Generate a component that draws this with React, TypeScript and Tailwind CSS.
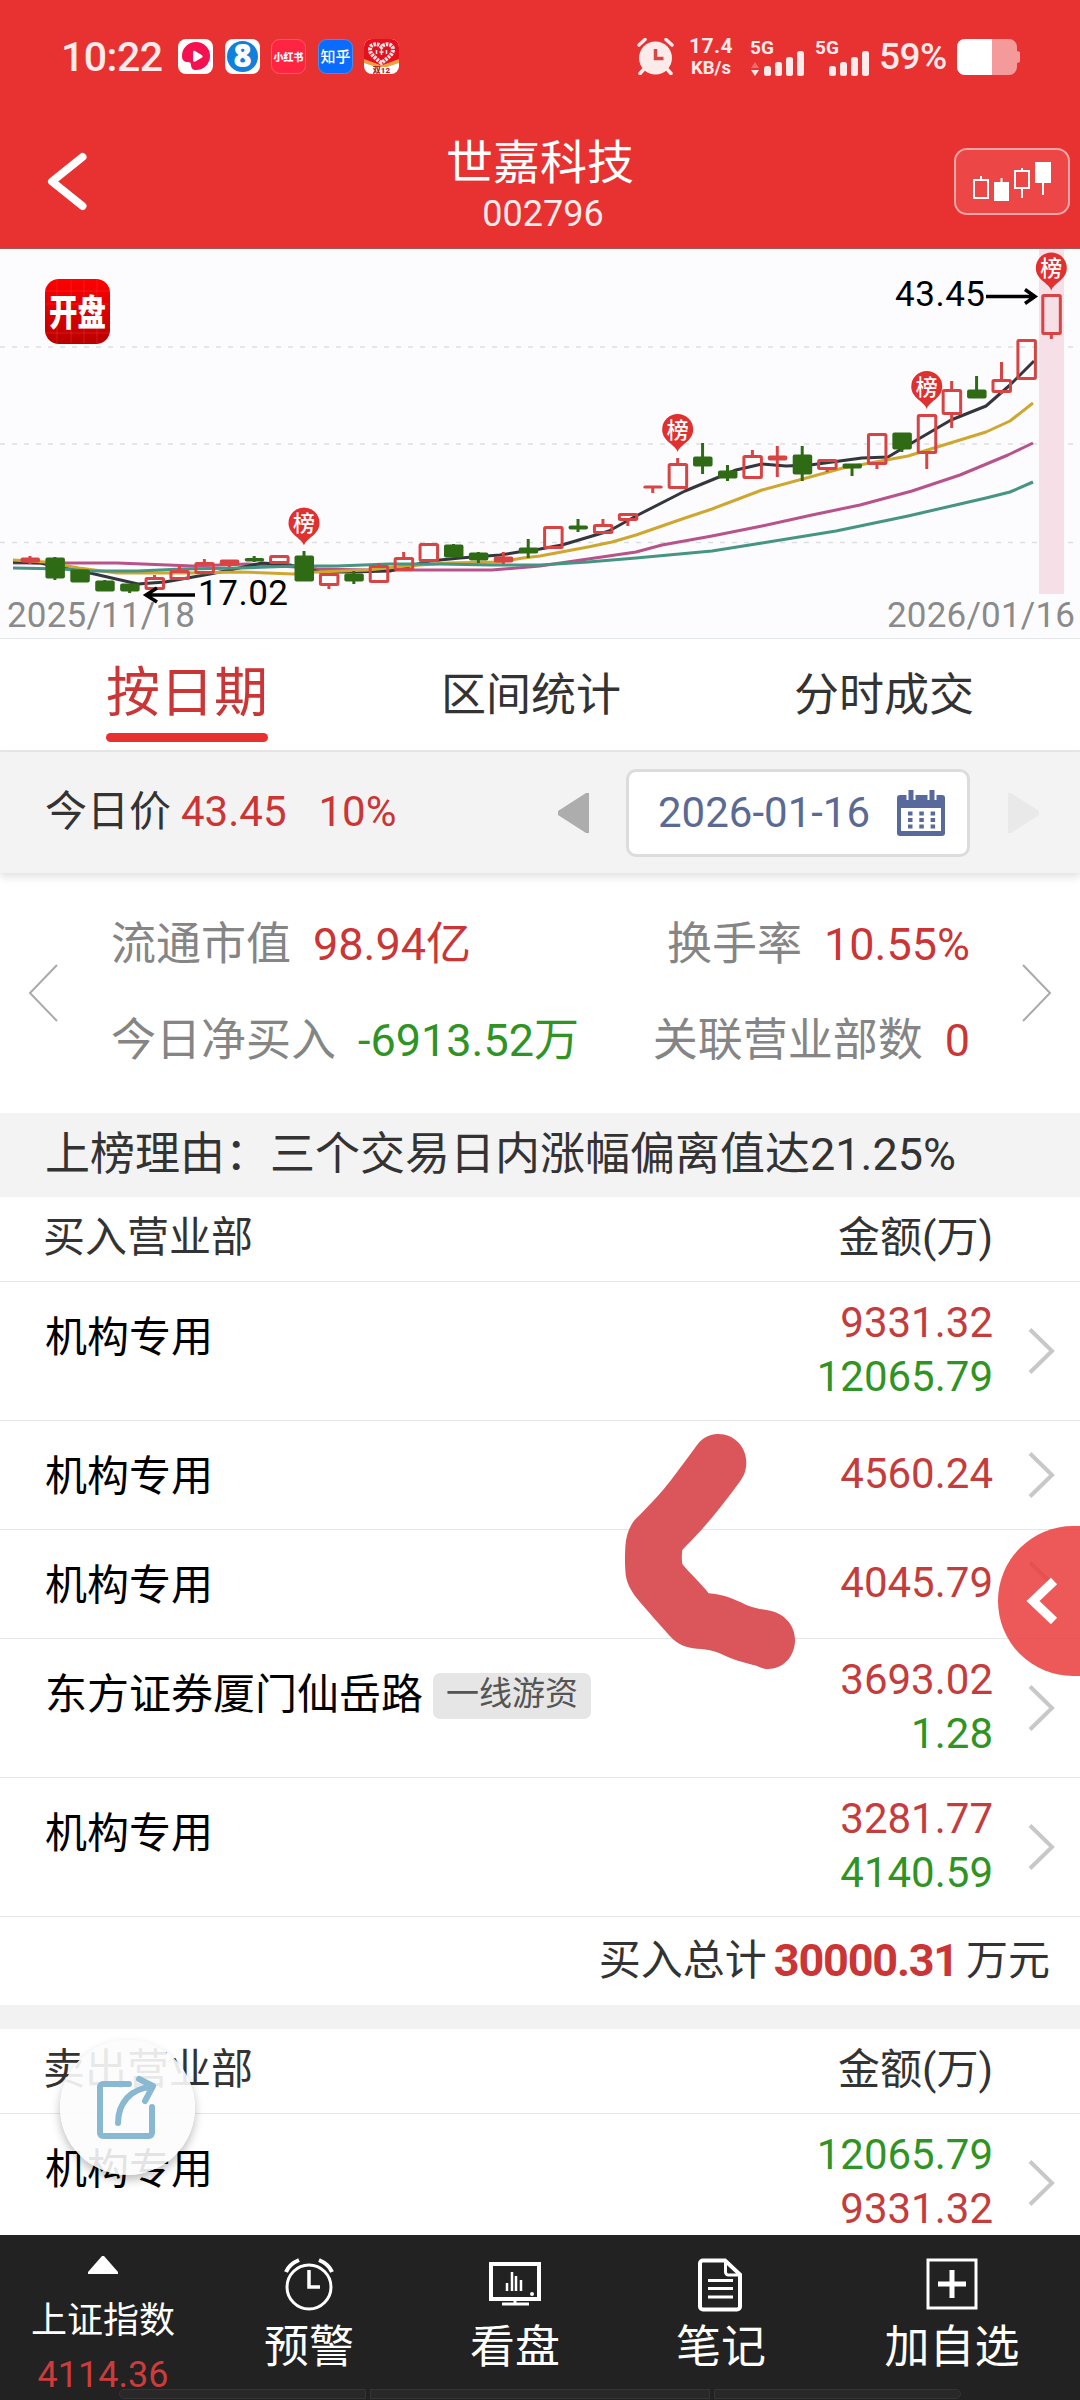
import type { ReactNode } from 'react'
import clsx from 'clsx'

type Tone = 'up' | 'down'

interface Seat {
  name: string
  tag?: string
  amounts: { value: string; tone: Tone }[]
}

interface Candle {
  kind: 'hollow' | 'red' | 'green'
  top: number
  bottom: number
  high?: number
  low?: number
}

const buySeats: Seat[] = [
  { name: '机构专用', amounts: [{ value: '9331.32', tone: 'up' }, { value: '12065.79', tone: 'down' }] },
  { name: '机构专用', amounts: [{ value: '4560.24', tone: 'up' }] },
  { name: '机构专用', amounts: [{ value: '4045.79', tone: 'up' }] },
  { name: '东方证券厦门仙岳路', tag: '一线游资', amounts: [{ value: '3693.02', tone: 'up' }, { value: '1.28', tone: 'down' }] },
  { name: '机构专用', amounts: [{ value: '3281.77', tone: 'up' }, { value: '4140.59', tone: 'down' }] },
]

const sellSeats: Seat[] = [
  { name: '机构专用', amounts: [{ value: '12065.79', tone: 'down' }, { value: '9331.32', tone: 'up' }] },
]

const g = (top: number, bottom: number, high?: number, low?: number): Candle => ({ kind: 'green', top, bottom, high, low })
const h = (top: number, bottom: number, high?: number, low?: number): Candle => ({ kind: 'hollow', top, bottom, high, low })
const r = (top: number, bottom: number, high?: number, low?: number): Candle => ({ kind: 'red', top, bottom, high, low })

const candles: Candle[] = [
  r(558, 562, 556, 564), g(558, 578, 557, 580), g(570, 582), g(581, 591, 580), g(584, 591, 584, 593),
  h(578, 589, 575), h(571, 579, 566), h(563, 573, 559), r(560, 565, 560, 567), g(558.5, 561, 556, 562),
  h(556, 563, 555), g(556, 581, 551), h(574, 585, 573, 589), g(574, 581, 571, 584), h(566, 582, 563),
  h(558, 570, 552), h(544, 561, 543), g(545, 557, 544), g(553, 560, 552, 563), r(557, 562, 552, 564),
  g(548, 553, 539, 558), h(527, 548), g(526, 529, 519, 532), h(525, 533, 519), h(514, 520, 513, 526),
  r(486, 488, 486, 493), h(464, 488, 458), g(457, 466, 443, 474), g(471, 478, 465, 481), h(456, 478, 450, 479),
  r(456, 460, 446, 477), g(455, 474, 446, 481), h(460, 469, 459, 472), g(464, 468, 464, 476), h(434, 464, 434, 469),
  g(433, 449, 433, 452), h(415, 453, 414, 469), h(390, 414, 381, 428), g(390, 398, 376), h(380, 392, 362, 394),
  h(340, 379), h(295, 334, 294, 339),
]

const candleX = (i: number) => 30 + i * 24.91

const averages = [
  { color: '#b8528a', points: '13,563 117,563 193,566 248,564 296,567 317,569 368,570 420,570 492,570 540,566 588,559 636,552 662,545 712,536 762,526 812,515 860,505 912,491 960,475 1008,455 1033,443' },
  { color: '#33363d', points: '13,562 40,563 90,573 138,584 165,582 210,574 230,570 262,563 290,565 320,572 350,572 390,571 430,561 460,558 500,555 525,551 540,549 562,545 609,531 636,516 685,491 719,477 736,470 762,464 786,466 810,465 862,458 888,457 910,444 951,420 986,406 1010,385 1034,361' },
  { color: '#cfa72e', points: '13,560 45,562 79,568 117,573 189,573 241,572 293,574 317,572 368,570 406,566 448,563 499,562 523,558 540,556 588,547 612,542 636,535 685,518 712,509 762,490 843,468 908,456 960,440 986,432 1010,421 1033,403' },
  { color: '#469482', points: '13,568 62,569 90,571 138,571 182,569 241,568 296,566 337,566 389,564 440,564 492,565 540,565 588,562 636,558 712,551 762,543 836,531 908,516 960,504 986,498 1010,492 1033,482' },
]

// pin y is the centre of the round part
const pins = [
  { i: 11, y: 523 },
  { i: 26, y: 429.5 },
  { i: 36, y: 386.5 },
  { i: 41, y: 268 },
]

function Signal({ arrows }: { arrows?: boolean }) {
  return (
    <svg width="56" height="38" viewBox="0 0 56 38" fill="#fdeaea" className="shrink-0 overflow-visible">
      <text x="0" y="15.500" fontSize="19" fontWeight="700">5G</text>
      {arrows && <path d="M1 30h8l-4-6z" fill="#ef6b6b" />}
      {arrows && <path d="M1 32h8l-4 6z" />}
      <rect x="14" y="28" width="7" height="10" rx="2.500" />
      <rect x="25" y="24" width="7" height="14" rx="2.500" />
      <rect x="36" y="19" width="7" height="19" rx="2.500" />
      <rect x="47" y="13" width="7" height="25" rx="2.500" />
    </svg>
  )
}

function StatusBar() {
  return (
    <div className="flex h-[113px] items-center pl-[61px] pr-[60px] text-[#fdeaea]">
      <span className="w-[117px] text-[41px] leading-[48px] font-medium tracking-[-0.5px]">10:22</span>
      <div className="flex gap-[11.5px]">
        <svg width="35" height="35" viewBox="0 0 35 35">
          <rect width="35" height="35" rx="8" fill="#fff" />
          <path d="M4 17a14 14 0 1 1 14 14c-3 0-5-2-5-5 0-2-1-3-3-3-4 0-6-2-6-6z" fill="#f5104f" />
          <path d="M15 13.500c0-1.600 1-2 2.400-1.300l6.300 3.800c1.300.8 1.300 2 0 2.800l-6.300 3.600c-1.400.7-2.400.2-2.400-1.300z" fill="#fff" />
        </svg>
        <svg width="35" height="35" viewBox="0 0 35 35" className="overflow-visible">
          <rect width="35" height="35" rx="8" fill="#fff" />
          <circle cx="17.500" cy="17.500" r="15.500" fill="#1180dc" />
          <text x="17.500" y="28" textAnchor="middle" fontSize="31" fontWeight="900" fill="#fff" className="font-['Noto_Sans']">8</text>
        </svg>
        <svg width="35" height="35" viewBox="0 0 35 35">
          <rect x=".5" y=".5" width="34" height="34" rx="8" fill="#ff2442" stroke="#ff5a6e" />
          <text x="17.500" y="21.500" textAnchor="middle" fontSize="10" fontWeight="900" fill="#fff">小红书</text>
        </svg>
        <svg width="35" height="35" viewBox="0 0 35 35">
          <rect x=".5" y=".5" width="34" height="34" rx="8" fill="#0a6cff" stroke="#4d8de8" />
          <text x="17.500" y="23" textAnchor="middle" fontSize="15" fontWeight="500" fill="#fff">知乎</text>
        </svg>
        <svg width="35" height="35" viewBox="0 0 35 35">
          <rect width="35" height="35" rx="8" fill="#fff" />
          <path d="M0 21V8a8 8 0 0 1 8-8h19a8 8 0 0 1 8 8v13l-17.500 6z" fill="#e60f1e" />
          <path d="M0 20l17.500 6.500L35 20v4l-12 4H12L0 24z" fill="#f0a040" />
          <path d="M17.500 24C10 18 6 15 6 10.500c0-6 8-7 11.500-2.500C21 3.500 29 4.500 29 10.500c0 4.500-4 7.500-11.500 13.500z" fill="none" stroke="#fde3e3" strokeWidth="4" strokeDasharray="2.500 1" />
          <path d="M12.500 11v4M22.500 11v4M15.500 13h4M17.500 11v5" stroke="#fde3e3" strokeWidth="1.500" />
          <text x="17.500" y="33.500" textAnchor="middle" fontSize="8" fontWeight="900" fill="#b3261e">双12</text>
        </svg>
      </div>

      <div className="ml-auto flex items-center">
        <svg width="37" height="37" viewBox="0 0 37 37" className="mr-[16px]">
          <circle cx="18.500" cy="20" r="16.500" fill="#fdeaea" />
          <path d="M2 7l6-5.500M35 7l-6-5.500M7 31l-4 4.500M30 31l4 4.500" stroke="#fdeaea" strokeWidth="3.500" strokeLinecap="round" />
          <path d="M18.500 11v9.500h8" fill="none" stroke="#d94444" strokeWidth="3.500" />
        </svg>
        <div className="mr-[18px] flex w-[42px] flex-col items-center font-bold">
          <span className="text-[21px] leading-[22px] tracking-[0.5px]">17.4</span>
          <span className="text-[18.5px] leading-[22px]">KB/s</span>
        </div>
        <Signal arrows />
        <span className="w-[9px]" />
        <Signal />
        <span className="ml-[8px] w-[78px] text-[37px] leading-[44px] font-medium tracking-[-0.5px]">59%</span>
        <svg width="63" height="36" viewBox="0 0 63 36" className="shrink-0">
          <path d="M8 0h44a8 8 0 0 1 8 8v4l3 1v10l-3 1v4a8 8 0 0 1-8 8H8a8 8 0 0 1-8-8V8a8 8 0 0 1 8-8z" fill="#f59a9a" />
          <path d="M8 0h27v36H8a8 8 0 0 1-8-8V8a8 8 0 0 1 8-8z" fill="#fff" />
        </svg>
      </div>
    </div>
  )
}

function TitleBar() {
  return (
    <div className="grid h-[135px] grid-cols-[1fr_auto_1fr] pr-[10px] pl-[10px]">
      <svg width="60" height="60" viewBox="0 0 60 60" fill="none" className="mt-[39px] ml-[37px]">
        <path d="M35.500 5L5 29.500l30.500 24.500" stroke="#fff" strokeWidth="8" strokeLinecap="round" strokeLinejoin="round" />
      </svg>
      <div className="flex flex-col items-center text-white">
        <h1 className="mt-[20px] text-[47px] leading-[60px]">世嘉科技</h1>
        <p className="mt-[-1px] mr-[-6px] text-[36px] leading-[44px] text-[#fdeaea]">002796</p>
      </div>
      <button className="mt-[35px] h-[67px] w-[116px] justify-self-end rounded-[13px] border-2 border-[#f6a6a6] bg-[#ec4646]" aria-label="K线">
        <svg width="112" height="63" viewBox="0 0 112 63" stroke="#fff" strokeWidth="2" fill="none">
          <path d="M18 30h14v18H18zM25 30v-4M59 21h14v17H59zM66 21v-3M66 38v10" />
          <path d="M39 33h13v17H39zM80 13h14v19H80z" fill="#fff" />
          <path d="M45.500 32v-4M87 32v13" />
        </svg>
      </button>
    </div>
  )
}

function KLine() {
  return (
    <svg width="1080" height="391" viewBox="0 248 1080 391" className="block bg-[#fcfcff]">
      <line x1="0" x2="1080" y1="248.500" y2="248.500" stroke="#a05a5a" />
      {[347, 444, 542.5].map(y => (
        <line key={y} x1="0" x2="1080" y1={y} y2={y} stroke="#dcdfe0" strokeWidth="1.500" strokeDasharray="5 7" />
      ))}
      <rect x="1039" y="249" width="25" height="345" fill="#f6dfe6" />

      <defs>
        <linearGradient id="logo" x1="0" y1="0" x2="0" y2="1">
          <stop offset="0" stopColor="#ff0000" />
          <stop offset="1" stopColor="#b80000" />
        </linearGradient>
      </defs>
      <rect x="45" y="279" width="65" height="65" rx="14" fill="url(#logo)" />
      <path d="M57 280v63M71 280v63M84 280v63M97 280v63M46 291h63M46 304h63M46 333h63" stroke="#ff5050" strokeOpacity=".3" />
      <text x="77.500" y="325.500" textAnchor="middle" fontSize="36" fontWeight="900" fill="#fff" textLength="57" lengthAdjust="spacingAndGlyphs">开盘</text>

      {averages.map(line => (
        <polyline key={line.color} points={line.points} fill="none" stroke={line.color} strokeWidth="3" strokeLinejoin="round" />
      ))}

      {candles.map((c, i) => {
        const x = candleX(i)
        const color = c.kind === 'green' ? '#2f6a14' : '#d84343'
        const high = c.high ?? c.top
        const low = c.low ?? c.bottom
        return (
          <g key={i} stroke={color} strokeWidth="3">
            {high < c.top && <line x1={x} x2={x} y1={high} y2={c.top} />}
            {low > c.bottom && <line x1={x} x2={x} y1={c.bottom} y2={low} />}
            {c.kind === 'hollow' ? (
              <rect x={x - 8.5} y={c.top + 0.5} width="17.500" height={c.bottom - c.top - 1} rx="1" fill="none" />
            ) : (
              <rect x={x - 9.5} y={c.top - 0.5} width="19.500" height={c.bottom - c.top + 1} rx="2" fill={color} stroke="none" />
            )}
          </g>
        )
      })}

      {pins.map(p => (
        <g key={p.i} transform={`translate(${candleX(p.i)} ${p.y})`}>
          <path d="M0 22.500C-2 15-15.500 12-15.500 0a15.500 15.500 0 0 1 31 0C15.500 12 2 15 0 22.500z" fill="#e03030" />
          <text y="8" textAnchor="middle" fontSize="22" fontWeight="500" fill="#fff">榜</text>
        </g>
      ))}

      <g fill="none" stroke="#000" strokeWidth="3.500">
        <path d="M195 595h-47M157 588l-11 7 11 7" />
        <path d="M986 296.500h47M1025 289.500l10 7-10 7" />
      </g>
      <text x="198" y="605" fontSize="35" fill="#000" textLength="90">17.02</text>
      <text x="895" y="306" fontSize="35" fill="#000" textLength="90">43.45</text>
      <text x="7" y="627" fontSize="35" fill="#8a8a8a" textLength="188">2025/11/18</text>
      <text x="887" y="627" fontSize="35" fill="#8a8a8a" textLength="188">2026/01/16</text>
      <line x1="0" x2="1080" y1="638.500" y2="638.500" stroke="#e4e8ea" />
    </svg>
  )
}

function Tabs() {
  return (
    <nav className="flex h-[113px] justify-between border-b-2 border-[#e8e8e8] px-[106px] text-[45px] text-[#333]">
      <button className="flex flex-col text-[54px] text-[#cc3535]">
        <span className="mt-[17px] h-[77px] leading-[76px]">按日期</span>
        <span className="h-[9px] w-full rounded-full bg-[#e83232]" />
      </button>
      <button className="h-[111px] pt-[2px] leading-[110px]">区间统计</button>
      <button className="h-[111px] pt-[2px] leading-[110px]">分时成交</button>
    </nav>
  )
}

function PriceBar() {
  return (
    <div className="relative flex h-[121px] items-center bg-[#f3f3f3] pl-[45px] pr-[40px] text-[42px] shadow-[0_4px_8px_rgba(0,0,0,0.12)]">
      <div className="flex pb-[2px] leading-[60px]">
        <span className="text-[#333]">今日价</span>
        <span className="ml-[10px] text-[#cc3535]">43.45</span>
        <span className="ml-[32px] text-[#cc3535]">10%</span>
      </div>
      <svg width="32" height="42" viewBox="0 0 32 42" className="ml-auto">
        <path d="M32 1v40h-3L1 23v-4L29 1z" fill="#adadad" />
      </svg>
      <button className="ml-[37px] flex h-[88px] w-[344px] items-center rounded-[10px] border-[3px] border-[#dcdcdc] bg-white pl-[29px] text-[#5a6a94]">
        <span className="leading-[60px]">2026-01-16</span>
        <svg width="50" height="46" viewBox="0 0 50 46" className="ml-[26px]">
          <path d="M4 5h42a3 3 0 0 1 3 3v35a3 3 0 0 1-3 3H4a3 3 0 0 1-3-3V8a3 3 0 0 1 3-3z" fill="#576a9b" />
          <path d="M5 18h40v23H5z" fill="#fff" />
          <path d="M15 0v10M36 0v10" stroke="#fff" strokeWidth="9" />
          <path d="M15 0v11M36 0v11" stroke="#576a9b" strokeWidth="5" />
          <path d="M12 23.500h28M12 30h28M12 36.500h28" stroke="#576a9b" strokeWidth="4" strokeDasharray="4.500 6.800" />
        </svg>
      </button>
      <svg width="32" height="42" viewBox="0 0 32 42" className="ml-[38px]">
        <path d="M0 1v40h3l28-18v-4L3 1z" fill="#e9e9e9" />
      </svg>
    </div>
  )
}

function Stat({ label, value, tone }: { label: string; value: string; tone: Tone }) {
  return (
    <p className="flex gap-[22px]">
      <span className="text-[#858585]">{label}</span>
      <span className={tone === 'up' ? 'text-[#cc3535]' : 'text-[#2f9424]'}>{value}</span>
    </p>
  )
}

function Summary() {
  return (
    <section className="flex h-[240px] items-center px-[28px]">
      <svg width="30" height="58" viewBox="0 0 30 58" fill="none" stroke="#aaa" strokeWidth="2">
        <path d="M29 1L2 29l27 28" />
      </svg>
      <div className="flex flex-1 flex-col gap-[30px] pr-[52px] pl-[53px] text-[45px] leading-[66px]">
        <div className="flex justify-between">
          <Stat label="流通市值" value="98.94亿" tone="up" />
          <Stat label="换手率" value="10.55%" tone="up" />
        </div>
        <div className="flex justify-between">
          <Stat label="今日净买入" value="-6913.52万" tone="down" />
          <Stat label="关联营业部数" value="0" tone="up" />
        </div>
      </div>
      <svg width="30" height="58" viewBox="0 0 30 58" fill="none" stroke="#aaa" strokeWidth="2">
        <path d="M1 1l27 28L1 57" />
      </svg>
    </section>
  )
}

function ListHead({ title }: { title: string }) {
  return (
    <div className="flex h-[85px] items-center justify-between border-b border-[#e6e6e6] pr-[87px] pb-[2px] pl-[43px] text-[42px] leading-[60px] text-[#333]">
      <span>{title}</span>
      <span>金额(万)</span>
    </div>
  )
}

function SeatRow({ seat }: { seat: Seat }) {
  const tall = seat.amounts.length > 1
  return (
    <div className={clsx('flex border-b border-[#e6e6e6] pr-[25px] pl-[45px] text-[42px]', tall ? 'h-[139px]' : 'h-[109px]')}>
      <span className="mt-[26px] leading-[60px] text-black">{seat.name}</span>
      {seat.tag && (
        <span className="mt-[34px] ml-[10px] h-[46px] rounded-[7px] bg-[#e6e6e6] px-[13px] text-[33px] leading-[42px] text-[#555]">{seat.tag}</span>
      )}
      <div className={clsx('ml-auto text-right leading-[54px]', tall ? 'mt-[14px]' : 'mt-[26px]')}>
        {seat.amounts.map(a => (
          <p key={a.value} className={a.tone === 'up' ? 'text-[#c43c3c]' : 'text-[#2f9424]'}>{a.value}</p>
        ))}
      </div>
      <svg width="27" height="46" viewBox="0 0 27 46" fill="none" stroke="#c8c8c8" strokeWidth="4" className="ml-[35px] self-center">
        <path d="M2 1.500L24 23 2 44.500" />
      </svg>
    </div>
  )
}

function NavItem({ label, children }: { label: string; children: ReactNode }) {
  return (
    <button className="flex flex-col items-center pt-[21px]">
      <svg width="56" height="56" viewBox="0 0 56 56" fill="none" stroke="#fff" strokeWidth="3">{children}</svg>
      <span className="mt-[6px] text-[45px] leading-[60px]">{label}</span>
    </button>
  )
}

function BottomBar() {
  return (
    <footer className="absolute inset-x-0 bottom-0 grid h-[165px] grid-cols-[206px_206px_206px_206px_1fr] bg-[#222] text-white">
      <div className="absolute bottom-[1px] left-[119px] flex h-[10px] w-[842px] gap-[4px]">
        <i className="w-[247px] rounded-l-full border border-[#343434] bg-[#282828]" />
        <i className="flex-1 border border-[#343434] bg-[#282828]" />
        <i className="w-[247px] rounded-r-full border border-[#343434] bg-[#282828]" />
      </div>
      <button className="relative flex flex-col items-center pt-[21px]">
        <svg width="32" height="18" viewBox="0 0 32 18">
          <path d="M15 0h2l14 16v2H1v-2z" fill="#fff" />
        </svg>
        <span className="mt-[20px] text-[36px] leading-[54px]">上证指数</span>
        <span className="text-[36px] leading-[54px] text-[#cc3c3c]">4114.36</span>
      </button>
      <NavItem label="预警">
        <circle cx="28" cy="31" r="22" />
        <path d="M28 14v17h11" strokeWidth="3.500" />
        <path d="M5 16c2-5 6-9 13-12M51 16c-2-5-6-9-13-12" strokeWidth="4" />
      </NavItem>
      <NavItem label="看盘">
        <path d="M4 8h48v35H4z" strokeWidth="4" />
        <path d="M20 27v8M25 16v19M29 20v15M34 24v11" strokeWidth="2.500" />
        <path d="M28 43v5M15 48h27" strokeWidth="3" />
        <circle cx="45" cy="38" r="2" fill="#fff" stroke="none" />
      </NavItem>
      <NavItem label="笔记">
        <path d="M10 4.500h22l15 14v32a3 3 0 0 1-3 3H10a3 3 0 0 1-3-3v-43a3 3 0 0 1 3-3z" strokeWidth="4" />
        <path d="M32.500 5v11a3 3 0 0 0 3 3H46" strokeWidth="3" />
        <path d="M15 24.500h25M15 32.500h25M15 41h25" />
      </NavItem>
      <NavItem label="加自选">
        <path d="M4 4h48v48H4z" />
        <path d="M28 14v28M14 28h28" strokeWidth="5" />
      </NavItem>
    </footer>
  )
}

export default function App() {
  return (
    <main className="relative h-[2400px] w-[1080px] overflow-hidden bg-white font-[Roboto,'Noto_Sans_CJK_SC',sans-serif]">
      <header className="bg-[#e83131]">
        <StatusBar />
        <TitleBar />
      </header>
      <KLine />
      <Tabs />
      <PriceBar />
      <Summary />
      <div className="h-[84px] bg-[#f3f3f3] pl-[45px] text-[45px] leading-[84px] text-[#333]">上榜理由：三个交易日内涨幅偏离值达21.25%</div>

      <ListHead title="买入营业部" />
      {buySeats.map((seat, i) => <SeatRow key={i} seat={seat} />)}
      <div className="flex h-[88px] items-center justify-end pr-[30px] text-[42px] leading-[60px] text-[#333]">
        <span>买入总计</span>
        <span className="mr-[8px] ml-[7px] text-[45px] font-bold tracking-[-1.2px] text-[#cc3535]">30000.31</span>
        <span>万元</span>
      </div>
      <div className="h-[24px] bg-[#f2f2f2]" />
      <ListHead title="卖出营业部" />
      {sellSeats.map((seat, i) => <SeatRow key={i} seat={seat} />)}

      {/* hand-drawn marker stroke */}
      <svg width="180" height="250" viewBox="190 90 540 750" className="absolute top-[1430px] left-[623px]">
        <path
          d="M475 102C525 102 560 142 560 187C560 212 552 230 540 245C500 300 460 350 425 390C405 412 385 432 368 450C366 465 366 480 368 492C390 520 420 545 447 580C485 582 520 595 560 615C590 628 610 627 635 633C680 645 706 680 706 720C706 770 670 807 625 807C610 807 600 801 590 797C550 788 520 780 480 760C460 752 440 748 425 747C390 746 362 738 340 718C310 685 275 645 240 605C215 577 197 545 197 510C195 485 196 460 197 440C199 405 210 372 235 350C262 322 285 300 310 270C345 228 375 185 405 145C422 118 445 102 475 102Z"
          fill="#db565b"
        />
      </svg>

      <button className="absolute top-[1526px] right-0 h-[150px] w-[82px] rounded-l-full bg-[#ea3c3c]/85 pl-[28px]" aria-label="展开">
        <svg width="32" height="50" viewBox="0 0 32 50" fill="none" stroke="#fff" strokeWidth="9">
          <path d="M28 5L7 25l21 20" />
        </svg>
      </button>

      <button className="absolute top-[2040px] left-[60px] flex size-[135px] items-center justify-center rounded-full bg-[#fcfcfc]/90 shadow-[0_5px_10px_rgba(0,0,0,0.25)]" aria-label="分享">
        <svg width="60" height="66" viewBox="0 0 60 66" fill="none" stroke="#89b8d2" strokeWidth="6" strokeLinecap="round" strokeLinejoin="round" className="mr-[3px]">
          <path d="M33 9H7a3 3 0 0 0-3 3v46a3 3 0 0 0 3 3h46a3 3 0 0 0 3-3V32" />
          <path d="M22 48C22 28 35 13 56 12M43 4l14 7-8 15" />
        </svg>
      </button>

      <BottomBar />
    </main>
  )
}
